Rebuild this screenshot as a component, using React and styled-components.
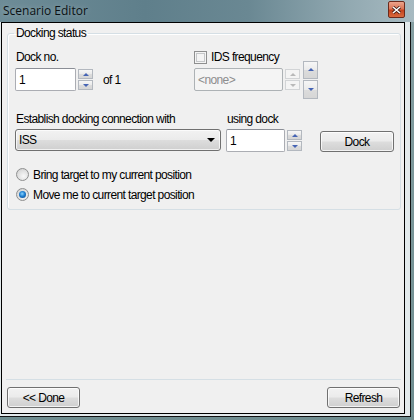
import React from "react";
import styled, { createGlobalStyle } from "styled-components";

const GlobalStyle = createGlobalStyle`
  body {
    margin: 0;
    background: #7c9898;
    font-family: "Liberation Sans", Arial, sans-serif;
    font-size: 12px;
    letter-spacing: -0.62px;
    color: #000;
  }
`;

const Window = styled.div`
  width: 414px;
  height: 420px;
  background: linear-gradient(180deg, #86a0a3 0%, #6f8d90 100%);
  overflow: hidden;
`;

const TitleBar = styled.div`
  height: 22px;
  display: flex;
  align-items: center;
  justify-content: space-between;
  padding: 0 9px 0 3px;
  box-sizing: border-box;
  background: linear-gradient(90deg, #6d8c97 0%, #5f7f8b 35%, #6a8893 60%, #93aab2 85%, #a7bac1 100%);
`;

const Title = styled.span`
  font-family: "Open Sans", "Liberation Sans", sans-serif;
  font-size: 12px;
  letter-spacing: 0;
  color: #0b1114;
  text-shadow: 0 0 6px rgba(255, 255, 255, 0.35);
  margin-top: -2px;
`;

const CloseButton = styled.div`
  width: 17px;
  height: 17px;
  margin-top: -3px;
  box-sizing: border-box;
  border: 1px solid #6b2a1c;
  border-radius: 2px;
  background: linear-gradient(180deg, #eba48c 0%, #dc7556 45%, #c4421d 55%, #d86a3e 100%);
  display: flex;
  align-items: center;
  justify-content: center;
`;

const Frame = styled.div`
  width: 411px;
  height: 395px;
  box-sizing: border-box;
  background: #e3eaec;
  border-right: 1px solid #111;
  border-bottom: 1px solid #111;
  padding-left: 1px;
`;

const Client = styled.div`
  width: 404px;
  height: 392px;
  box-sizing: border-box;
  border: 1px solid #000;
  background: #f0f0f0;
  display: flex;
  flex-direction: column;
`;

const Group = styled.fieldset`
  margin: 3px 3px 0 5px;
  padding: 0 7px 9px 7px;
  border: 1px solid #d5dfe5;
  border-radius: 3px;
  box-shadow: inset 1px 1px 0 #fff;
  height: 184px;
  box-sizing: border-box;
  min-width: 0;
`;

const Legend = styled.legend`
  padding: 0 2px;
  margin-left: -1px;
  line-height: 14px;
`;

const TopRow = styled.div`
  display: flex;
  margin-top: 10px;
`;

const Column = styled.div`
  width: ${(p) => p.$width}px;
  display: flex;
  flex-direction: column;
`;

const Label = styled.div`
  line-height: 14px;
  height: 14px;
  padding-left: 1px;
`;

const FieldRow = styled.div`
  display: flex;
  align-items: center;
  height: 23px;
  margin-top: ${(p) => p.$top ?? 4}px;
  gap: ${(p) => p.$gap ?? 2}px;
`;

const TextBox = styled.div`
  width: ${(p) => p.$width}px;
  height: ${(p) => p.$height ?? 23}px;
  box-sizing: border-box;
  border: 1px solid ${(p) => (p.$disabled ? "#adb2b5" : "#abadb3")};
  border-top-color: ${(p) => (p.$disabled ? "#adb2b5" : "#8b8e96")};
  border-radius: 2px;
  background: ${(p) => (p.$disabled ? "#f4f4f4" : "#fff")};
  color: ${(p) => (p.$disabled ? "#8d8d8d" : "#000")};
  display: flex;
  align-items: center;
  padding-left: 3px;
  flex-shrink: 0;
`;

const SpinStack = styled.div`
  display: flex;
  flex-direction: column;
  gap: 1px;
  flex-shrink: 0;
`;

const SpinBtn = styled.div`
  width: 15px;
  height: ${(p) => p.$height ?? 10}px;
  box-sizing: border-box;
  border: 1px solid ${(p) => (p.$disabled ? "#d2d4d6" : "#b3b8bf")};
  background: ${(p) =>
    p.$disabled
      ? "#f4f4f4"
      : "linear-gradient(180deg, #f6f6f6 0%, #eaeaea 50%, #dcdcdc 51%, #d6d6d6 100%)"};
  display: flex;
  align-items: center;
  justify-content: center;
`;

const Arrow = styled.div`
  width: 0;
  height: 0;
  border-left: ${(p) => p.$size ?? 3}px solid transparent;
  border-right: ${(p) => p.$size ?? 3}px solid transparent;
  ${(p) =>
    p.$down
      ? `border-top: ${p.$size ?? 3}px solid ${p.$color};`
      : `border-bottom: ${p.$size ?? 3}px solid ${p.$color};`}
`;

const OfText = styled.span`
  margin-left: 8px;
`;

const CheckRow = styled.label`
  display: flex;
  align-items: center;
  gap: 4px;
  height: 14px;
`;

const CheckBox = styled.span`
  width: 13px;
  height: 13px;
  box-sizing: border-box;
  border: 1px solid #8e8f8f;
  background: #f4f4f4;
  box-shadow: inset 0 0 0 1px #f4f4f4, inset 0 0 0 2px #c5c7c9;
  flex-shrink: 0;
`;

const BigSpin = styled(SpinStack)`
  margin-left: 1px;
`;

const SecondRow = styled.div`
  display: flex;
  align-items: flex-end;
  margin-top: 21px;
  gap: 5px;
`;

const Combo = styled.div`
  width: 206px;
  height: 22px;
  box-sizing: border-box;
  border: 1px solid #707070;
  border-radius: 3px;
  background: linear-gradient(180deg, #f2f2f2 0%, #ebebeb 48%, #dddddd 52%, #cfcfcf 100%);
  box-shadow: inset 0 0 0 1px rgba(255, 255, 255, 0.7);
  display: flex;
  align-items: center;
  justify-content: space-between;
  padding: 0 5px 0 3px;
  margin-top: 3px;
  margin-bottom: 1px;
`;

const Button = styled.div`
  width: ${(p) => p.$width}px;
  height: 21px;
  box-sizing: border-box;
  border: 1px solid #707070;
  border-radius: 3px;
  background: linear-gradient(180deg, #f2f2f2 0%, #ebebeb 48%, #dddddd 52%, #cfcfcf 100%);
  box-shadow: inset 0 0 0 1px rgba(255, 255, 255, 0.75);
  display: flex;
  align-items: center;
  justify-content: center;
  flex-shrink: 0;
  margin-left: ${(p) => p.$left ?? 0}px;
`;

const RadioList = styled.div`
  display: flex;
  flex-direction: column;
  gap: 7px;
  margin-top: 16px;
`;

const RadioRow = styled.label`
  display: flex;
  align-items: center;
  gap: 4px;
  height: 13px;
  padding-left: 1px;
`;

const Radio = styled.span`
  width: 13px;
  height: 13px;
  box-sizing: border-box;
  border-radius: 50%;
  border: 1px solid #8e8f8f;
  background: radial-gradient(circle at 60% 65%, #f8f8f8 0%, #e0e0e0 55%, #c8c8c8 100%);
  display: flex;
  align-items: center;
  justify-content: center;
  flex-shrink: 0;

  &::after {
    content: "";
    display: ${(p) => (p.$checked ? "block" : "none")};
    width: 7px;
    height: 7px;
    border-radius: 50%;
    background: radial-gradient(circle at 45% 40%, #8ad4ff 0%, #1e7fd0 45%, #0a3f80 100%);
  }
`;

const Spacer = styled.div`
  flex: 1;
`;

const Footer = styled.div`
  margin: 0 3px 5px 4px;
  padding: 7px 1px 0 1px;
  border-top: 1px solid #d5dfe5;
  display: flex;
  justify-content: space-between;
`;

const Spin = ({ disabled }) => {
  const color = disabled ? "#b9b9b9" : "#4664b4";
  return (
    <SpinStack>
      <SpinBtn $disabled={disabled}>
        <Arrow $color={color} />
      </SpinBtn>
      <SpinBtn $disabled={disabled}>
        <Arrow $down $color={color} />
      </SpinBtn>
    </SpinStack>
  );
};

const CloseGlyph = () => (
  <svg width="9" height="8" viewBox="0 0 9 8">
    <path d="M1 1 L8 7 M8 1 L1 7" stroke="#3b1a12" strokeWidth="3" />
    <path d="M1 1 L8 7 M8 1 L1 7" stroke="#fff" strokeWidth="1.6" />
  </svg>
);

const App = () => (
  <Window>
    <GlobalStyle />
    <TitleBar>
      <Title>Scenario Editor</Title>
      <CloseButton>
        <CloseGlyph />
      </CloseButton>
    </TitleBar>
    <Frame>
      <Client>
        <Group>
          <Legend>Docking status</Legend>
          <TopRow>
            <Column $width={180}>
              <Label>Dock no.</Label>
              <FieldRow>
                <TextBox $width={61}>1</TextBox>
                <Spin />
                <OfText>of 1</OfText>
              </FieldRow>
            </Column>
            <Column $width={200}>
              <CheckRow>
                <CheckBox />
                IDS frequency
              </CheckRow>
              <FieldRow>
                <TextBox $width={89} $disabled>
                  &lt;none&gt;
                </TextBox>
                <Spin disabled />
                <BigSpin>
                  <SpinBtn $height={18}>
                    <Arrow $color="#4664b4" />
                  </SpinBtn>
                  <SpinBtn $height={19}>
                    <Arrow $down $color="#4664b4" />
                  </SpinBtn>
                </BigSpin>
              </FieldRow>
            </Column>
          </TopRow>
          <SecondRow>
            <Column $width={206}>
              <Label>Establish docking connection with</Label>
              <Combo>
                ISS
                <Arrow $down $size={4} $color="#000" />
              </Combo>
            </Column>
            <Column $width={76}>
              <Label>using dock</Label>
              <FieldRow $top={3}>
                <TextBox $width={59}>1</TextBox>
                <Spin />
              </FieldRow>
            </Column>
            <Button $width={74} $left={13}>
              Dock
            </Button>
          </SecondRow>
          <RadioList>
            <RadioRow>
              <Radio />
              Bring target to my current position
            </RadioRow>
            <RadioRow>
              <Radio $checked />
              Move me to current target position
            </RadioRow>
          </RadioList>
        </Group>
        <Spacer />
        <Footer>
          <Button $width={73}>&lt;&lt; Done</Button>
          <Button $width={73}>Refresh</Button>
        </Footer>
      </Client>
    </Frame>
  </Window>
);

export default App;
